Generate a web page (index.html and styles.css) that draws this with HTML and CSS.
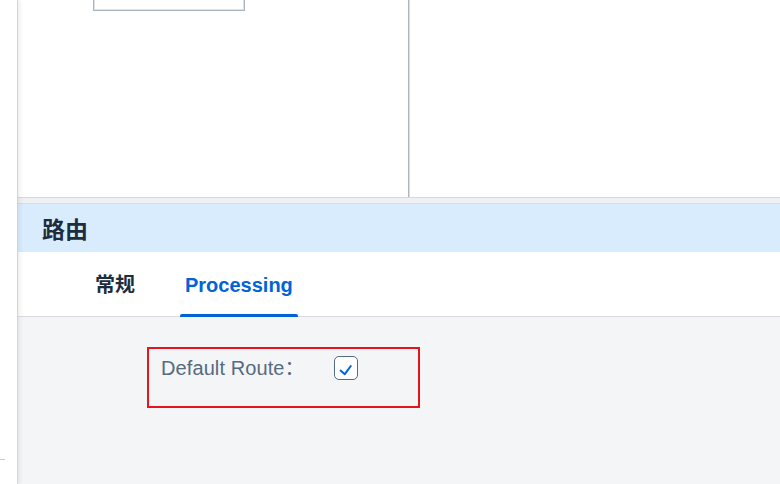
FILE: index.html
```html
<!DOCTYPE html>
<html lang="zh">
<head>
<meta charset="utf-8">
<title>路由</title>
<link rel="stylesheet" href="styles.css">
</head>
<body>
<div class="shell">
  <aside class="leftbar"><div class="tick"></div></aside>
  <main class="main">
    <section class="top">
      <div class="left-pane"><div class="card"></div></div>
      <div class="right-pane"></div>
    </section>
    <div class="band"></div>
    <header class="header"><h1 class="title">路由</h1></header>
    <nav class="tabs">
      <div class="tab">常规</div>
      <div class="tab active">Processing</div>
    </nav>
    <section class="content">
      <div class="field-box">
        <label class="label">Default Route：</label>
        <span class="checkbox">
          <svg viewBox="0 0 22 22" width="22" height="22"><path d="M5.6 13.6 L9.8 17.2 L15.8 9" fill="none" stroke="#0064d9" stroke-width="2" stroke-linecap="round" stroke-linejoin="round"/></svg>
        </span>
      </div>
    </section>
  </main>
</div>
</body>
</html>
```

FILE: styles.css
```css
* { box-sizing: border-box; }
html, body { margin: 0; padding: 0; }
body {
  width: 780px;
  height: 484px;
  overflow: hidden;
  background: #ffffff;
  font-family: "Liberation Sans", "Noto Sans CJK SC", sans-serif;
}
.shell {
  display: flex;
  height: 484px;
}
.leftbar {
  width: 18px;
  flex: none;
  background: #ffffff;
  border-right: 1px solid #d3d5d8;
  display: flex;
  flex-direction: column;
  position: relative;
  z-index: 1;
  box-shadow: 2px 0 4px rgba(0, 0, 0, 0.07);
}
.tick {
  margin-top: 459px;
  width: 5px;
  height: 1px;
  background: #c9cbce;
}
.main {
  flex: 1;
  display: flex;
  flex-direction: column;
  min-width: 0;
}
.top {
  height: 198px;
  flex: none;
  display: flex;
  border-bottom: 1px solid #d6d8da;
  background: #ffffff;
}
.left-pane {
  width: 391px;
  flex: none;
  border-right: 1px solid #aeb6be;
  box-shadow: 1px 0 0 #d9dde1;
}
.card {
  margin-left: 75px;
  width: 152px;
  height: 11px;
  border: 1px solid #aab4be;
  border-top: none;
  box-shadow: inset 1px -1px 0 #dce1e6, inset -1px 0 0 #dce1e6;
}
.right-pane { flex: 1; }
.band {
  height: 6px;
  flex: none;
  background: #eff0f1;
  border-bottom: 1px solid #d9dbdd;
}
.header {
  height: 48px;
  flex: none;
  background: #d9ecfd;
  display: flex;
  align-items: center;
  padding: 3px 0 0 24px;
}
.title {
  margin: 0;
  font-size: 23px;
  font-weight: 700;
  color: #1d2d3e;
  line-height: 28px;
}
.tabs {
  height: 65px;
  flex: none;
  background: #ffffff;
  border-bottom: 1px solid #d9dbde;
  display: flex;
  align-items: stretch;
  padding-left: 72px;
  gap: 40px;
}
.tab {
  position: relative;
  display: flex;
  align-items: center;
  padding: 2px 5px 0;
  font-size: 20px;
  font-weight: 700;
  color: #1d2d3e;
  line-height: 24px;
}
.tab.active { color: #0064d9; }
.tab.active::after {
  content: "";
  position: absolute;
  left: 0;
  right: 0;
  bottom: -1px;
  height: 3px;
  background: #0064d9;
  border-radius: 2px 2px 0 0;
}
.content {
  flex: 1;
  background: #f4f5f7;
  padding-top: 30px;
  padding-left: 129px;
}
.field-box {
  width: 273px;
  height: 61px;
  border: 2px solid #e8141c;
  display: flex;
  align-items: flex-start;
  padding: 7px 0 0 12px;
}
.label {
  width: 173px;
  flex: none;
  font-size: 20px;
  line-height: 24px;
  color: #556b82;
  letter-spacing: 0.1px;
}
.checkbox {
  width: 24px;
  height: 24px;
  border: 1px solid #556b82;
  border-radius: 5px;
  background: #ffffff;
  display: flex;
  align-items: center;
  justify-content: center;
}
.checkbox svg { display: block; }
```
